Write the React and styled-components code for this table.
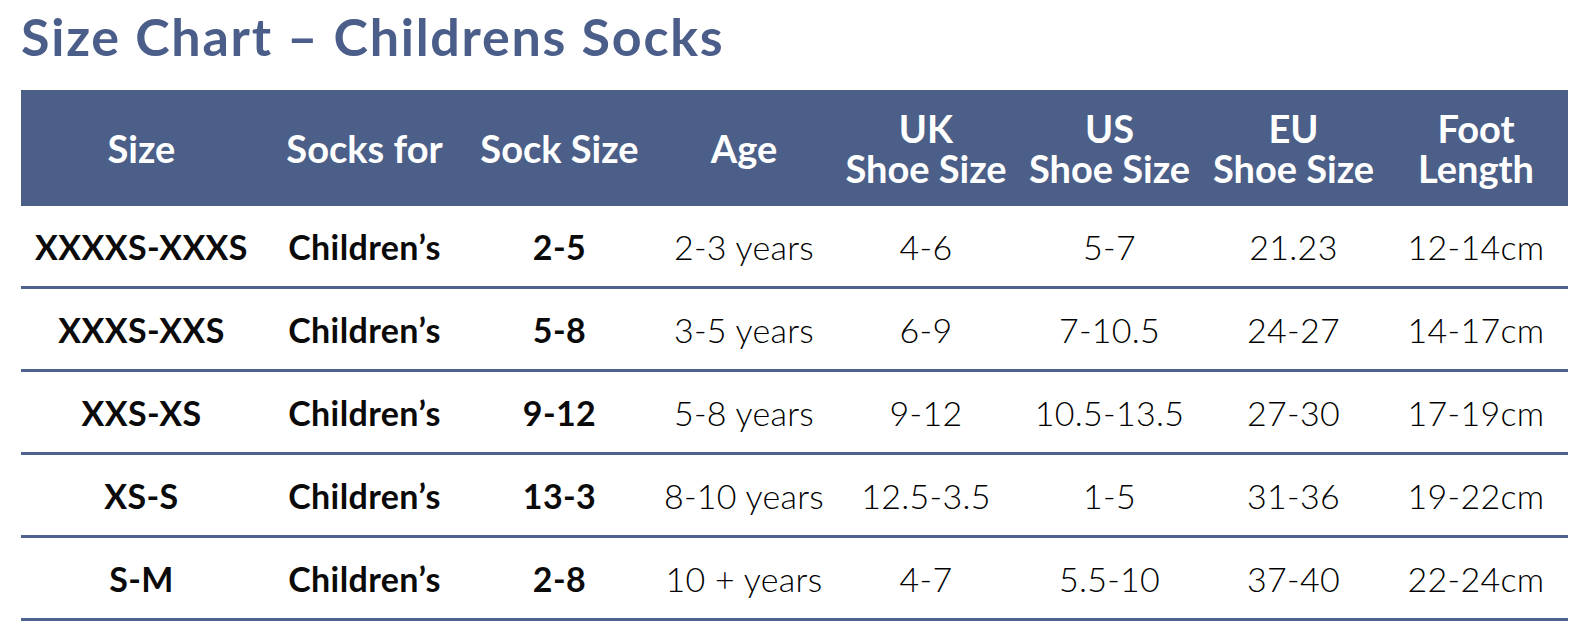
import React from "react";
import styled, { createGlobalStyle } from "styled-components";

const Global = createGlobalStyle`
  html, body { margin: 0; padding: 0; background: #ffffff; }
  body { font-family: Lato, "Open Sans", sans-serif; }
`;

const COLS = "241px 205px 185px 184px 180px 187px 181px 184px";

const Page = styled.div`
  width: 1577px;
  height: 643px;
  box-sizing: border-box;
  padding: 4px 9px 0 21px;
  background: #fff;
`;

const Title = styled.h1`
  margin: 0;
  height: 86px;
  font-family: Lato, sans-serif;
  font-weight: 700;
  font-size: 52px;
  line-height: 64px;
  color: #4b5e8a;
  letter-spacing: 1.75px;
  white-space: nowrap;
`;

const Table = styled.div`
  display: grid;
  grid-template-columns: ${COLS};
`;

const Row = styled.div`
  display: contents;
`;

const HeadCell = styled.div`
  height: 116px;
  background: #4b5f89;
  color: #fff;
  display: flex;
  align-items: center;
  justify-content: center;
  text-align: center;
  font-family: Lato, sans-serif;
  font-weight: 700;
  font-size: 38px;
  line-height: 40px;
  white-space: pre-line;
`;

const Cell = styled.div`
  height: 80px;
  border-bottom: 3px solid #4d6290;
  display: flex;
  align-items: center;
  justify-content: center;
  text-align: center;
  font-family: Lato, sans-serif;
  font-size: 34px;
  font-weight: ${(p) => (p.$bold ? 700 : 300)};
  letter-spacing: ${(p) => (p.$bold ? "0.4px" : "0.3px")};
  color: ${(p) => (p.$bold ? "#0a0a0a" : "#000000")};
  white-space: nowrap;
`;

const headers = [
  "Size",
  "Socks for",
  "Sock Size",
  "Age",
  "UK\nShoe Size",
  "US\nShoe Size",
  "EU\nShoe Size",
  "Foot\nLength",
];

const rows = [
  ["XXXXS-XXXS", "Children’s", "2-5", "2-3 years", "4-6", "5-7", "21.23", "12-14cm"],
  ["XXXS-XXS", "Children’s", "5-8", "3-5 years", "6-9", "7-10.5", "24-27", "14-17cm"],
  ["XXS-XS", "Children’s", "9-12", "5-8 years", "9-12", "10.5-13.5", "27-30", "17-19cm"],
  ["XS-S", "Children’s", "13-3", "8-10 years", "12.5-3.5", "1-5", "31-36", "19-22cm"],
  ["S-M", "Children’s", "2-8", "10 + years", "4-7", "5.5-10", "37-40", "22-24cm"],
];

export default function App() {
  return (
    <>
      <Global />
      <Page>
        <Title>Size Chart – Childrens Socks</Title>
        <Table>
          <Row>
            {headers.map((h) => (
              <HeadCell key={h}>{h}</HeadCell>
            ))}
          </Row>
          {rows.map((r, i) => (
            <Row key={i}>
              {r.map((c, j) => (
                <Cell key={j} $bold={j < 3}>
                  {c}
                </Cell>
              ))}
            </Row>
          ))}
        </Table>
      </Page>
    </>
  );
}
